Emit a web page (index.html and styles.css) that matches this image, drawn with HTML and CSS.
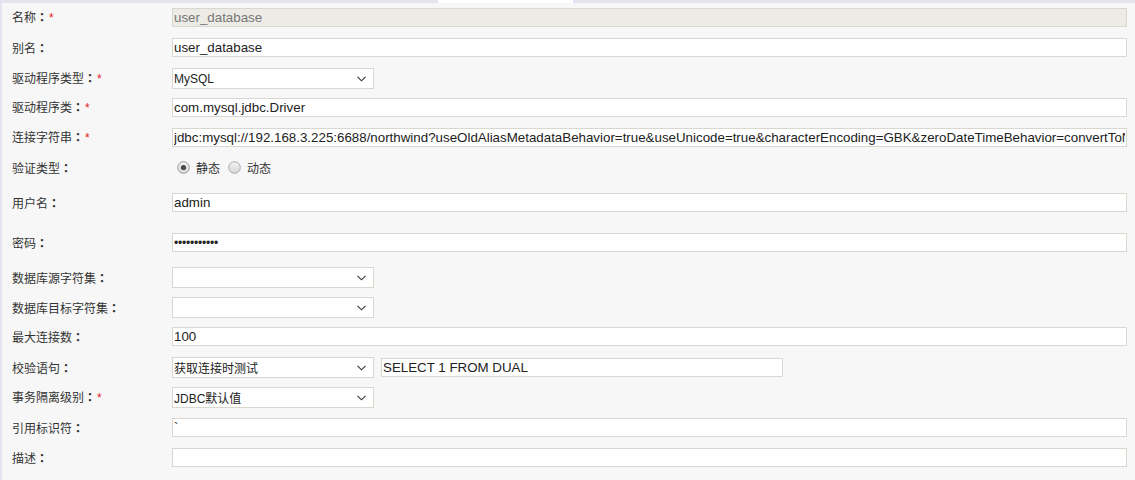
FILE: index.html
```html
<!DOCTYPE html>
<html lang="zh-CN">
<head>
<meta charset="utf-8">
<title>数据连接</title>
<link rel="stylesheet" href="styles.css">
</head>
<body>
<div class="tabstrip">
  <div class="tab-off tab-first"></div>
  <div class="tab-on"></div>
  <div class="tab-off tab-rest"></div>
</div>
<form class="form">
  <div class="row">
    <label class="label">名称<span class="colon">：</span><span class="req">*</span></label>
    <input class="field disabled" type="text" value="user_database" disabled>
  </div>
  <div class="row">
    <label class="label">别名<span class="colon">：</span></label>
    <input class="field" type="text" value="user_database">
  </div>
  <div class="row row-sel">
    <label class="label">驱动程序类型<span class="colon">：</span><span class="req">*</span></label>
    <div class="select"><span class="sel-text">MySQL</span><svg class="chev" width="9" height="6" viewBox="0 0 9 6"><path d="M0.5 0.8 L4.5 4.8 L8.5 0.8" fill="none" stroke="#333" stroke-width="1.1"/></svg></div>
  </div>
  <div class="row">
    <label class="label">驱动程序类<span class="colon">：</span><span class="req">*</span></label>
    <input class="field" type="text" value="com.mysql.jdbc.Driver">
  </div>
  <div class="row">
    <label class="label">连接字符串<span class="colon">：</span><span class="req">*</span></label>
    <input class="field" type="text" value="jdbc:mysql://192.168.3.225:6688/northwind?useOldAliasMetadataBehavior=true&amp;useUnicode=true&amp;characterEncoding=GBK&amp;zeroDateTimeBehavior=convertToNull">
  </div>
  <div class="row row-radio">
    <label class="label">验证类型<span class="colon">：</span></label>
    <div class="radios">
      <span class="radio">
        <svg width="13" height="13" viewBox="0 0 13 13"><defs><linearGradient id="rg" x1="0" y1="0" x2="0" y2="1"><stop offset="0" stop-color="#f4f4f4"/><stop offset="1" stop-color="#d6d6d6"/></linearGradient></defs><circle cx="6.5" cy="6.5" r="5.8" fill="url(#rg)" stroke="#9a9a9a" stroke-width="1"/><circle cx="6.5" cy="6.5" r="2.6" fill="#4a4a4a"/></svg>
        <span class="radio-text">静态</span>
      </span>
      <span class="radio">
        <svg width="13" height="13" viewBox="0 0 13 13"><defs><linearGradient id="rg2" x1="0" y1="0" x2="0" y2="1"><stop offset="0" stop-color="#f4f4f4"/><stop offset="1" stop-color="#d6d6d6"/></linearGradient></defs><circle cx="6.5" cy="6.5" r="5.8" fill="url(#rg2)" stroke="#a8a8a8" stroke-width="1"/></svg>
        <span class="radio-text">动态</span>
      </span>
    </div>
  </div>
  <div class="row row-user">
    <label class="label">用户名<span class="colon">：</span></label>
    <input class="field" type="text" value="admin">
  </div>
  <div class="row row-pwd">
    <label class="label">密码<span class="colon">：</span></label>
    <input class="field field-pwd" type="password" value="admin123456">
  </div>
  <div class="row row-sel">
    <label class="label">数据库源字符集<span class="colon">：</span></label>
    <div class="select"><span class="sel-text"></span><svg class="chev" width="9" height="6" viewBox="0 0 9 6"><path d="M0.5 0.8 L4.5 4.8 L8.5 0.8" fill="none" stroke="#333" stroke-width="1.1"/></svg></div>
  </div>
  <div class="row row-sel">
    <label class="label">数据库目标字符集<span class="colon">：</span></label>
    <div class="select"><span class="sel-text"></span><svg class="chev" width="9" height="6" viewBox="0 0 9 6"><path d="M0.5 0.8 L4.5 4.8 L8.5 0.8" fill="none" stroke="#333" stroke-width="1.1"/></svg></div>
  </div>
  <div class="row">
    <label class="label">最大连接数<span class="colon">：</span></label>
    <input class="field" type="text" value="100">
  </div>
  <div class="row row-sel">
    <label class="label">校验语句<span class="colon">：</span></label>
    <div class="select"><span class="sel-text">获取连接时测试</span><svg class="chev" width="9" height="6" viewBox="0 0 9 6"><path d="M0.5 0.8 L4.5 4.8 L8.5 0.8" fill="none" stroke="#333" stroke-width="1.1"/></svg></div>
    <input class="field field-sql" type="text" value="SELECT 1 FROM DUAL">
  </div>
  <div class="row row-sel row-iso">
    <label class="label">事务隔离级别<span class="colon">：</span><span class="req">*</span></label>
    <div class="select"><span class="sel-text">JDBC默认值</span><svg class="chev" width="9" height="6" viewBox="0 0 9 6"><path d="M0.5 0.8 L4.5 4.8 L8.5 0.8" fill="none" stroke="#333" stroke-width="1.1"/></svg></div>
  </div>
  <div class="row">
    <label class="label">引用标识符<span class="colon">：</span></label>
    <input class="field" type="text" value="`">
  </div>
  <div class="row">
    <label class="label">描述<span class="colon">：</span></label>
    <input class="field" type="text" value="">
  </div>
</form>
</body>
</html>
```
FILE: styles.css
```css
html, body {
  margin: 0;
  padding: 0;
}
body {
  background: #f7f7f7;
  border-left: 2px solid #e4e4f0;
  min-height: 480px;
  box-sizing: border-box;
  font-family: "Noto Sans CJK SC", "Liberation Sans", sans-serif;
  font-size: 12px;
  color: #333;
}
.tabstrip {
  display: flex;
  height: 3px;
}
.tab-off {
  background: #e4e4f0;
}
.tab-first {
  width: 436px;
}
.tab-on {
  width: 135px;
  background: #ffffff;
}
.tab-rest {
  flex: 1;
}
.form {
  padding: 5px 8px 0 10px;
}
.row {
  display: flex;
  align-items: center;
  height: 19px;
  margin-bottom: 11px;
}
.row-sel {
  height: 21px;
  margin-bottom: 9px;
}
.row-iso {
  margin-bottom: 10px;
}
.row-radio {
  margin-bottom: 16px;
}
.row-user {
  margin-bottom: 21px;
}
.row-pwd {
  margin-bottom: 15px;
}
.label {
  width: 160px;
  flex: none;
  font-size: 12px;
  line-height: 19px;
  color: #333;
  white-space: nowrap;
}
.colon {
  display: inline-block;
  font-family: "Noto Sans CJK TC", "Noto Sans CJK SC", sans-serif;
  font-weight: bold;
}
.req {
  color: #e02020;
  font-family: "Liberation Sans", sans-serif;
  font-size: 12px;
  margin-left: 1px;
}
.field {
  flex: 1;
  min-width: 0;
  box-sizing: border-box;
  height: 19px;
  margin: 0;
  padding: 0 1px;
  border: 1px solid #d9d8d0;
  background: #ffffff;
  font-family: "Liberation Sans", "Noto Sans CJK SC", sans-serif;
  font-size: 13.33px;
  color: #222;
  outline: none;
}
.field.disabled {
  background: #ecebe5;
  color: #777;
  border-color: #d9d8d0;
}
.field-pwd {
  font-size: 12px;
  letter-spacing: -0.2px;
}
.field-sql {
  flex: none;
  width: 402px;
  margin-left: 7px;
}
.select {
  flex: none;
  box-sizing: border-box;
  width: 202px;
  height: 21px;
  border: 1px solid #d9d8d0;
  background: #ffffff;
  display: flex;
  align-items: center;
  justify-content: space-between;
  padding: 0 7px 0 1px;
}
.sel-text {
  font-family: "Liberation Sans", "Noto Sans CJK SC", sans-serif;
  font-size: 12px;
  color: #222;
  white-space: nowrap;
}
.chev {
  display: block;
}
.radios {
  display: flex;
  align-items: center;
  padding-left: 5px;
}
.radio {
  display: flex;
  align-items: center;
  margin-right: 8px;
}
.radio svg {
  display: block;
}
.radio-text {
  margin-left: 6px;
  font-size: 12px;
  color: #333;
}
```
